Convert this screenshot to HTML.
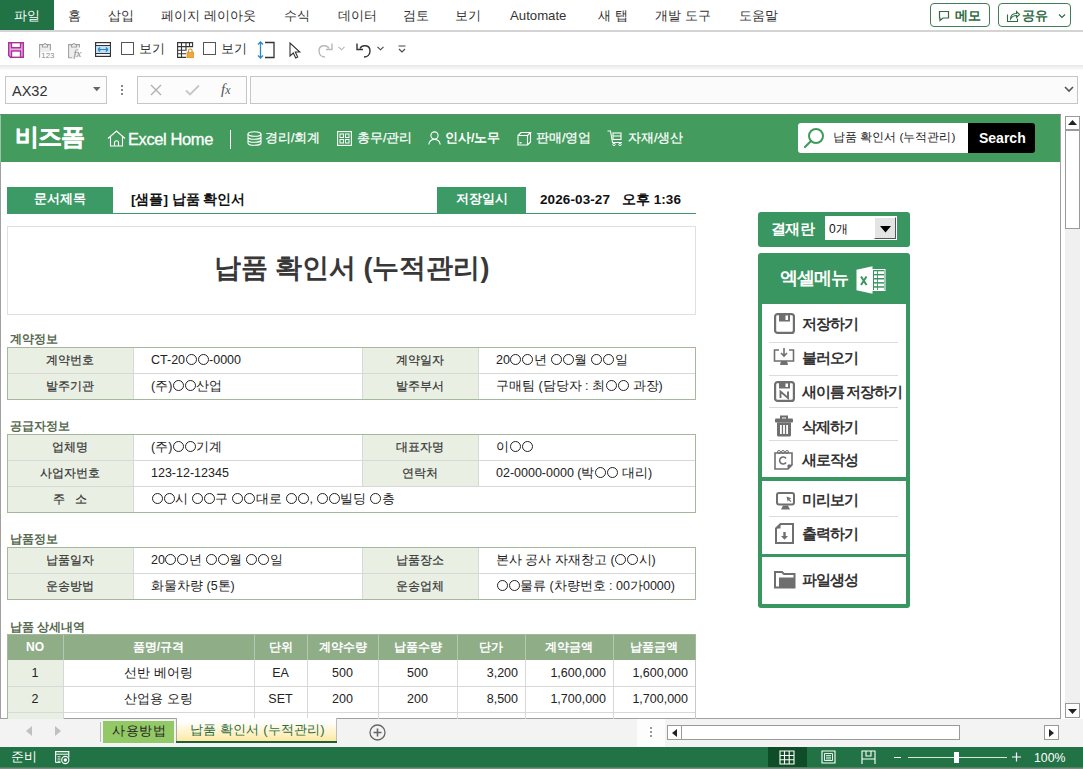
<!DOCTYPE html>
<html><head><meta charset="utf-8">
<style>
*{box-sizing:border-box}
html,body{margin:0;padding:0}
body{width:1083px;height:769px;position:relative;overflow:hidden;background:#fff;font-family:"Liberation Sans",sans-serif;color:#222}
.a{position:absolute;white-space:nowrap}
svg.a{overflow:visible}
.o{display:inline-block;width:11px;height:11px;border:1px solid currentColor;border-radius:50%;margin:0 0.5px;vertical-align:-1px}
</style></head><body>
<div class="a" style="left:0px;top:0px;width:54px;height:30px;background:#217346"></div><div class="a" style="left:14px;top:9px;font-size:13.2px;line-height:13.2px;color:#fff;font-weight:normal;">파일</div><div class="a" style="left:68px;top:9px;font-size:13.2px;line-height:13.2px;color:#333;font-weight:normal;">홈</div><div class="a" style="left:108px;top:9px;font-size:13.2px;line-height:13.2px;color:#333;font-weight:normal;">삽입</div><div class="a" style="left:161px;top:9px;font-size:13.2px;line-height:13.2px;color:#333;font-weight:normal;">페이지 레이아웃</div><div class="a" style="left:284px;top:9px;font-size:13.2px;line-height:13.2px;color:#333;font-weight:normal;">수식</div><div class="a" style="left:338px;top:9px;font-size:13.2px;line-height:13.2px;color:#333;font-weight:normal;">데이터</div><div class="a" style="left:403px;top:9px;font-size:13.2px;line-height:13.2px;color:#333;font-weight:normal;">검토</div><div class="a" style="left:455px;top:9px;font-size:13.2px;line-height:13.2px;color:#333;font-weight:normal;">보기</div><div class="a" style="left:510px;top:9px;font-size:13.2px;line-height:13.2px;color:#333;font-weight:normal;">Automate</div><div class="a" style="left:598px;top:9px;font-size:13.2px;line-height:13.2px;color:#333;font-weight:normal;">새 탭</div><div class="a" style="left:655px;top:9px;font-size:13.2px;line-height:13.2px;color:#333;font-weight:normal;">개발 도구</div><div class="a" style="left:739px;top:9px;font-size:13.2px;line-height:13.2px;color:#333;font-weight:normal;">도움말</div><div class="a" style="left:930px;top:3px;width:60px;height:24px;border:1px solid #3f7f55;border-radius:4px"></div><div class="a" style="left:998px;top:3px;width:73px;height:24px;border:1px solid #3f7f55;border-radius:4px"></div><svg class="a" style="left:938px;top:10px;" width="12" height="12" viewBox="0 0 12 12"><path d="M1.5 1.5h9v6.5h-5.5l-3 2.5v-2.5h-0.5z" fill="none" stroke="#2f6b43" stroke-width="1.2"/></svg><div class="a" style="left:955px;top:9px;font-size:13px;line-height:13px;color:#2f6b43;font-weight:bold;">메모</div><svg class="a" style="left:1006px;top:9px;" width="14" height="14" viewBox="0 0 14 14"><path d="M1.5 5.5v7h10v-3" fill="none" stroke="#2f6b43" stroke-width="1.1"/><path d="M4.5 10c0-4 3-5.5 6-5.5V2.5l3 3-3 3V6.5c-2.5 0-4.5 1-6 3.5z" fill="none" stroke="#2f6b43" stroke-width="1.1"/></svg><div class="a" style="left:1022px;top:9px;font-size:13px;line-height:13px;color:#2f6b43;font-weight:bold;">공유</div><svg class="a" style="left:1058px;top:13px;" width="8" height="6" viewBox="0 0 8 6"><path d="M1 1.5l3 3 3-3" fill="none" stroke="#2f6b43" stroke-width="1.2"/></svg><div class="a" style="left:0px;top:30px;width:1083px;height:2px;background:#d4d4d4"></div><div class="a" style="left:0px;top:65px;width:1083px;height:6px;background:linear-gradient(#e8e8e8,#f6f6f6 60%,#fff)"></div><svg class="a" style="left:8px;top:42px;" width="16" height="16" viewBox="0 0 16 16"><path d="M0.7 0.7h14.6v14.6H2.5L0.7 13.5z" fill="#e3a9e0" stroke="#a6339f" stroke-width="1.4"/><rect x="3.5" y="0.7" width="9" height="5" fill="#fff" stroke="#a6339f" stroke-width="1.4"/><rect x="3.5" y="9" width="9" height="6.3" fill="#fff" stroke="#a6339f" stroke-width="1.4"/></svg><svg class="a" style="left:39px;top:41px;" width="15" height="17" viewBox="0 0 15 17"><rect x="1.2" y="4.2" width="9.6" height="7" fill="#eeeeee"/><path d="M0.6 16.8V3.6H3.5M8.5 3.6H11.4V9.5" fill="none" stroke="#a0a0a0" stroke-width="1.1"/><path d="M3.5 6V3.6h1.4a1.1 1.1 0 0 1 2.2 0h1.4V6z" fill="#fff" stroke="#a0a0a0" stroke-width="1.1"/><text x="2.3" y="16.8" font-size="7.8" fill="#8a8a8a" font-family="Liberation Sans">123</text></svg><svg class="a" style="left:68px;top:41px;" width="15" height="17" viewBox="0 0 15 17"><rect x="1.2" y="4.2" width="9.6" height="12" fill="#eeeeee"/><path d="M4.5 16.8H0.6V3.6H3.5M8.5 3.6H11.4V6.5" fill="none" stroke="#a0a0a0" stroke-width="1.1"/><path d="M3.5 6V3.6h1.4a1.1 1.1 0 0 1 2.2 0h1.4V6z" fill="#fff" stroke="#a0a0a0" stroke-width="1.1"/><text x="5.5" y="16.2" font-size="11" font-style="italic" fill="#8a8a8a" font-family="Liberation Serif">fx</text></svg><svg class="a" style="left:95px;top:42px;" width="16" height="15" viewBox="0 0 16 15"><rect x="0.6" y="0.6" width="14.8" height="13.8" fill="#fff" stroke="#333" stroke-width="1.2"/><rect x="1.2" y="3.6" width="13.6" height="7.8" fill="#bfe0f5"/><path d="M0.6 3.5h14.8M0.6 11.5h14.8" stroke="#333" stroke-width="1.1"/><path d="M3 7.5h10M3 7.5l2.2-2M3 7.5l2.2 2M13 7.5l-2.2-2M13 7.5l-2.2 2" fill="none" stroke="#2b87c8" stroke-width="1.2"/></svg><div class="a" style="left:121px;top:42px;width:13px;height:13px;border:1px solid #555;background:#fff"></div><div class="a" style="left:139px;top:42px;font-size:13px;line-height:13px;color:#333;font-weight:normal;">보기</div><svg class="a" style="left:177px;top:42px;" width="17" height="16" viewBox="0 0 17 16"><path d="M0.6 0.6h15v4H0.6zM0.6 4.6v10.8h8.5M0.6 8.2h9M0.6 11.8h8.5M4.5 0.6v14.8M9 0.6v8M12.5 0.6v4" fill="none" stroke="#333" stroke-width="1.1"/><rect x="10" y="10.2" width="6.5" height="5.5" fill="#f2a640" stroke="#d68b20" stroke-width="0.7"/><path d="M11.5 10.2V8.8a1.8 1.8 0 0 1 3.6 0v1.4" fill="none" stroke="#d68b20" stroke-width="1.1"/></svg><div class="a" style="left:203px;top:42px;width:13px;height:13px;border:1px solid #555;background:#fff"></div><div class="a" style="left:221px;top:42px;font-size:13px;line-height:13px;color:#333;font-weight:normal;">보기</div><svg class="a" style="left:257px;top:41px;" width="18" height="18" viewBox="0 0 18 18"><path d="M3.5 1v16M1 3.5l2.5-2.5 2.5 2.5M1 14.5l2.5 2.5 2.5-2.5" fill="none" stroke="#2b87c8" stroke-width="1.3"/><path d="M8 1.5h9v15H8" fill="none" stroke="#333" stroke-width="1.3"/></svg><svg class="a" style="left:289px;top:42px;" width="12" height="17" viewBox="0 0 12 17"><path d="M1 1v13l3.3-3 2.4 5 2-1-2.4-5h4.5z" fill="#fff" stroke="#333" stroke-width="1.1"/></svg><svg class="a" style="left:317px;top:41px;" width="17" height="17" viewBox="0 0 17 17"><g transform="translate(17 0) scale(-1 1)"><path d="M5 7.5c2-4 10-4 10 2.5 0 4-3 6-6 6" fill="none" stroke="#b8b8b8" stroke-width="1.4"/><path d="M2 2.5v6h6" fill="none" stroke="#b8b8b8" stroke-width="1.4"/></g></svg><svg class="a" style="left:338px;top:46px;" width="7" height="5" viewBox="0 0 7 5"><path d="M0.5 0.8l3 3 3-3" fill="none" stroke="#b5b5b5" stroke-width="1.1"/></svg><svg class="a" style="left:355px;top:41px;" width="17" height="17" viewBox="0 0 17 17"><path d="M5 7.5c2-4 10-4 10 2.5 0 4-3 6-6 6" fill="none" stroke="#333" stroke-width="1.4"/><path d="M2 2.5v6h6" fill="none" stroke="#333" stroke-width="1.4"/></svg><svg class="a" style="left:377px;top:46px;" width="7" height="5" viewBox="0 0 7 5"><path d="M0.5 0.8l3 3 3-3" fill="none" stroke="#444" stroke-width="1.1"/></svg><svg class="a" style="left:398px;top:45px;" width="8" height="8" viewBox="0 0 8 8"><path d="M0.5 1h7M1 4l3 3 3-3" fill="none" stroke="#444" stroke-width="1.1"/></svg><div class="a" style="left:0px;top:70px;width:1083px;height:44px;background:#fff"></div><div class="a" style="left:5px;top:76px;width:102px;height:28px;border:1px solid #c6c6c6;background:#fcfcfc"></div><div class="a" style="left:12px;top:84px;font-size:14.5px;line-height:14.5px;color:#333;font-weight:normal;">AX32</div><svg class="a" style="left:93px;top:87px;" width="8" height="5" viewBox="0 0 8 5"><path d="M0 0h7.5l-3.75 4.2z" fill="#666"/></svg><div class="a" style="left:121px;top:85px;width:2px;height:2px;background:#888"></div><div class="a" style="left:121px;top:89px;width:2px;height:2px;background:#888"></div><div class="a" style="left:121px;top:93px;width:2px;height:2px;background:#888"></div><div class="a" style="left:137px;top:76px;width:110px;height:28px;border:1px solid #c6c6c6;background:#fcfcfc"></div><svg class="a" style="left:150px;top:84px;" width="12" height="12" viewBox="0 0 12 12"><path d="M1 1l10 10M11 1L1 11" stroke="#b0b0b0" stroke-width="1.4"/></svg><svg class="a" style="left:185px;top:84px;" width="15" height="12" viewBox="0 0 15 12"><path d="M1 6.5l4 4 9-9" fill="none" stroke="#c6c6c6" stroke-width="1.8"/></svg><div class="a" style="left:221px;top:81px;font-family:'Liberation Serif',serif;font-style:italic;font-weight:normal;font-size:15px;color:#555">f<span style="font-size:12px">x</span></div><div class="a" style="left:250px;top:76px;width:828px;height:28px;border:1px solid #c6c6c6;background:#fbfbfb"></div><svg class="a" style="left:1064px;top:86px;" width="10" height="7" viewBox="0 0 10 7"><path d="M1 1l4 4 4-4" fill="none" stroke="#555" stroke-width="1.6"/></svg><div class="a" style="left:0px;top:114px;width:1061px;height:605px;border-left:1px solid #a0a0a0;border-right:1px solid #a0a0a0;border-bottom:1px solid #a0a0a0"></div><div class="a" style="left:1px;top:114px;width:1059px;height:48px;background:#439b5e"></div><div class="a" style="left:0px;top:114px;width:1061px;height:1px;background:#5d8f6b"></div><div class="a" style="left:0px;top:115px;width:1px;height:47px;background:#9ec4a8"></div><div class="a" style="left:15px;top:125px;font-size:24px;line-height:24px;color:#fff;font-weight:bold;letter-spacing:-1px;-webkit-text-stroke:0.4px #fff">비즈폼</div><svg class="a" style="left:107px;top:130px;" width="19" height="17" viewBox="0 0 19 17"><path d="M1 8.5L9.5 1 18 8.5M3.5 6.5V16h12V6.5" fill="none" stroke="#fff" stroke-width="1.1"/><path d="M7.5 16v-3.2a2 2 0 0 1 4 0V16" fill="none" stroke="#fff" stroke-width="1.1"/></svg><div class="a" style="left:128px;top:131px;font-size:16.5px;line-height:16.5px;color:#fff;font-weight:normal;letter-spacing:-0.4px;-webkit-text-stroke:0.3px #fff">Excel Home</div><div class="a" style="left:230px;top:130px;width:1px;height:19px;background:#fff"></div><svg class="a" style="left:247px;top:131px;" width="15" height="15" viewBox="0 0 15 15"><ellipse cx="7.5" cy="3" rx="6.5" ry="2.3" fill="none" stroke="#fff" stroke-width="1.1"/><path d="M1 3v9c0 1.3 2.9 2.3 6.5 2.3S14 13.3 14 12V3M1 6c0 1.3 2.9 2.3 6.5 2.3S14 7.3 14 6M1 9c0 1.3 2.9 2.3 6.5 2.3S14 10.3 14 9" fill="none" stroke="#fff" stroke-width="1.1"/></svg><div class="a" style="left:265px;top:132px;font-size:12.6px;line-height:12.6px;color:#fff;font-weight:normal;-webkit-text-stroke:0.25px #fff">경리/회계</div><svg class="a" style="left:337px;top:131px;" width="15" height="15" viewBox="0 0 15 15"><rect x="0.6" y="0.6" width="13.8" height="13.8" fill="none" stroke="#fff" stroke-width="1.1"/><rect x="3" y="3" width="3.5" height="3.5" fill="none" stroke="#fff" stroke-width="1"/><rect x="8.5" y="3" width="3.5" height="3.5" fill="none" stroke="#fff" stroke-width="1"/><rect x="3" y="8.5" width="3.5" height="3.5" fill="none" stroke="#fff" stroke-width="1"/><rect x="8.5" y="8.5" width="3.5" height="3.5" fill="none" stroke="#fff" stroke-width="1"/></svg><div class="a" style="left:357px;top:132px;font-size:12.6px;line-height:12.6px;color:#fff;font-weight:normal;-webkit-text-stroke:0.25px #fff">총무/관리</div><svg class="a" style="left:428px;top:131px;" width="13" height="14" viewBox="0 0 13 14"><circle cx="6.5" cy="4.5" r="3.6" fill="none" stroke="#fff" stroke-width="1.1"/><path d="M0.8 13.5c0.5-3.5 2.8-5 5.7-5s5.2 1.5 5.7 5" fill="none" stroke="#fff" stroke-width="1.1"/></svg><div class="a" style="left:445px;top:132px;font-size:12.5px;line-height:12.5px;color:#fff;font-weight:bold;">인사/노무</div><svg class="a" style="left:517px;top:131px;" width="15" height="15" viewBox="0 0 15 15"><path d="M1 4.5h9.5v9.5H1zM1 4.5L4 1.5h9.5L10.5 4.5M13.5 1.5v9.5l-3 3" fill="none" stroke="#fff" stroke-width="1.1"/><rect x="2.5" y="11" width="2" height="1.5" fill="#fff"/></svg><div class="a" style="left:536px;top:132px;font-size:12.6px;line-height:12.6px;color:#fff;font-weight:normal;-webkit-text-stroke:0.25px #fff">판매/영업</div><svg class="a" style="left:607px;top:130px;" width="17" height="16" viewBox="0 0 17 16"><path d="M0.5 1h3l2 11.5h9.5" fill="none" stroke="#fff" stroke-width="1.1"/><rect x="6" y="3" width="8" height="6.5" fill="none" stroke="#fff" stroke-width="1.1"/><path d="M6 6h8" stroke="#fff" stroke-width="1"/><circle cx="7" cy="14.5" r="1.2" fill="none" stroke="#fff"/><circle cx="13" cy="14.5" r="1.2" fill="none" stroke="#fff"/></svg><div class="a" style="left:628px;top:132px;font-size:12.6px;line-height:12.6px;color:#fff;font-weight:normal;-webkit-text-stroke:0.25px #fff">자재/생산</div><div class="a" style="left:798px;top:123px;width:170px;height:30px;background:#fff;border-radius:3px 0 0 3px"></div><div class="a" style="left:968px;top:123px;width:67px;height:30px;background:#000;border-radius:0 3px 3px 0"></div><svg class="a" style="left:803px;top:127px;" width="22" height="22" viewBox="0 0 22 22"><circle cx="13" cy="9" r="7" fill="none" stroke="#3e9a5c" stroke-width="2"/><path d="M8 14l-6 6" stroke="#3e9a5c" stroke-width="2.2" stroke-linecap="round"/></svg><div class="a" style="left:833px;top:132px;font-size:11.8px;line-height:11.8px;color:#222;font-weight:normal;">납품 확인서 (누적관리)</div><div class="a" style="left:979px;top:131px;font-size:14px;line-height:14px;color:#fff;font-weight:bold;">Search</div><div class="a" style="left:7px;top:187px;width:106px;height:27px;background:#3b9a66"></div><div class="a" style="left:7px;top:213px;width:689px;height:1px;background:#3b9a66"></div><div class="a" style="left:437px;top:187px;width:89px;height:27px;background:#3b9a66"></div><div class="a" style="left:7px;width:106px;text-align:center;top:192px;font-size:13px;line-height:13px;color:#fff;font-weight:bold;">문서제목</div><div class="a" style="left:131px;top:193px;font-size:13.5px;line-height:13.5px;color:#111;font-weight:bold;">[샘플] 납품 확인서</div><div class="a" style="left:437px;width:89px;text-align:center;top:192px;font-size:13px;line-height:13px;color:#fff;font-weight:bold;">저장일시</div><div class="a" style="left:540px;top:193px;font-size:13.5px;line-height:13.5px;color:#111;font-weight:bold;letter-spacing:0.1px">2026-03-27&nbsp;&nbsp; 오후 1:36</div><div class="a" style="left:7px;top:226px;width:689px;height:89px;border:1px solid #e0e0e0"></div><div class="a" style="left:7px;width:689px;text-align:center;top:255px;font-size:27px;line-height:27px;color:#383838;font-weight:bold;">납품 확인서 (누적관리)</div><div class="a" style="left:10px;top:333px;font-size:11.7px;line-height:11.7px;color:#56694f;font-weight:bold;">계약정보</div><div class="a" style="left:7px;top:347px;width:126px;height:26px;background:#e9f0e3"></div><div class="a" style="left:362px;top:347px;width:116px;height:26px;background:#e9f0e3"></div><div class="a" style="left:7px;top:373px;width:126px;height:26px;background:#e9f0e3"></div><div class="a" style="left:362px;top:373px;width:116px;height:26px;background:#e9f0e3"></div><div class="a" style="left:7px;top:373px;width:689px;height:1px;background:#d8d8d8"></div><div class="a" style="left:133px;top:347px;width:1px;height:26px;background:#d8d8d8"></div><div class="a" style="left:362px;top:347px;width:1px;height:26px;background:#d8d8d8"></div><div class="a" style="left:478px;top:347px;width:1px;height:26px;background:#d8d8d8"></div><div class="a" style="left:133px;top:373px;width:1px;height:26px;background:#d8d8d8"></div><div class="a" style="left:362px;top:373px;width:1px;height:26px;background:#d8d8d8"></div><div class="a" style="left:478px;top:373px;width:1px;height:26px;background:#d8d8d8"></div><div class="a" style="left:7px;top:347px;width:689px;height:53px;border:1px solid #a4b99c"></div><div class="a" style="left:7px;width:126px;text-align:center;top:354px;font-size:12px;line-height:12px;color:#333;font-weight:normal;-webkit-text-stroke:0.2px #333">계약번호</div><div class="a" style="left:151px;top:354px;font-size:12.5px;line-height:12.5px;color:#222;font-weight:normal;">CT-20<span class="o"></span><span class="o"></span>-0000</div><div class="a" style="left:362px;width:116px;text-align:center;top:354px;font-size:12px;line-height:12px;color:#333;font-weight:normal;-webkit-text-stroke:0.2px #333">계약일자</div><div class="a" style="left:496px;top:354px;font-size:12.5px;line-height:12.5px;color:#222;font-weight:normal;">20<span class="o"></span><span class="o"></span>년 <span class="o"></span><span class="o"></span>월 <span class="o"></span><span class="o"></span>일</div><div class="a" style="left:7px;width:126px;text-align:center;top:380px;font-size:12px;line-height:12px;color:#333;font-weight:normal;-webkit-text-stroke:0.2px #333">발주기관</div><div class="a" style="left:151px;top:380px;font-size:12.5px;line-height:12.5px;color:#222;font-weight:normal;">(주)<span class="o"></span><span class="o"></span>산업</div><div class="a" style="left:362px;width:116px;text-align:center;top:380px;font-size:12px;line-height:12px;color:#333;font-weight:normal;-webkit-text-stroke:0.2px #333">발주부서</div><div class="a" style="left:496px;top:380px;font-size:12.5px;line-height:12.5px;color:#222;font-weight:normal;">구매팀 (담당자 : 최<span class="o"></span><span class="o"></span> 과장)</div><div class="a" style="left:10px;top:420px;font-size:11.7px;line-height:11.7px;color:#56694f;font-weight:bold;">공급자정보</div><div class="a" style="left:7px;top:434px;width:126px;height:26px;background:#e9f0e3"></div><div class="a" style="left:362px;top:434px;width:116px;height:26px;background:#e9f0e3"></div><div class="a" style="left:7px;top:460px;width:126px;height:26px;background:#e9f0e3"></div><div class="a" style="left:362px;top:460px;width:116px;height:26px;background:#e9f0e3"></div><div class="a" style="left:7px;top:486px;width:126px;height:26px;background:#e9f0e3"></div><div class="a" style="left:7px;top:460px;width:689px;height:1px;background:#d8d8d8"></div><div class="a" style="left:7px;top:486px;width:689px;height:1px;background:#d8d8d8"></div><div class="a" style="left:133px;top:434px;width:1px;height:26px;background:#d8d8d8"></div><div class="a" style="left:362px;top:434px;width:1px;height:26px;background:#d8d8d8"></div><div class="a" style="left:478px;top:434px;width:1px;height:26px;background:#d8d8d8"></div><div class="a" style="left:133px;top:460px;width:1px;height:26px;background:#d8d8d8"></div><div class="a" style="left:362px;top:460px;width:1px;height:26px;background:#d8d8d8"></div><div class="a" style="left:478px;top:460px;width:1px;height:26px;background:#d8d8d8"></div><div class="a" style="left:133px;top:486px;width:1px;height:26px;background:#d8d8d8"></div><div class="a" style="left:7px;top:434px;width:689px;height:79px;border:1px solid #a4b99c"></div><div class="a" style="left:7px;width:126px;text-align:center;top:441px;font-size:12px;line-height:12px;color:#333;font-weight:normal;-webkit-text-stroke:0.2px #333">업체명</div><div class="a" style="left:151px;top:441px;font-size:12.5px;line-height:12.5px;color:#222;font-weight:normal;">(주)<span class="o"></span><span class="o"></span>기계</div><div class="a" style="left:362px;width:116px;text-align:center;top:441px;font-size:12px;line-height:12px;color:#333;font-weight:normal;-webkit-text-stroke:0.2px #333">대표자명</div><div class="a" style="left:496px;top:441px;font-size:12.5px;line-height:12.5px;color:#222;font-weight:normal;">이<span class="o"></span><span class="o"></span></div><div class="a" style="left:7px;width:126px;text-align:center;top:467px;font-size:12px;line-height:12px;color:#333;font-weight:normal;-webkit-text-stroke:0.2px #333">사업자번호</div><div class="a" style="left:151px;top:467px;font-size:12.5px;line-height:12.5px;color:#222;font-weight:normal;">123-12-12345</div><div class="a" style="left:362px;width:116px;text-align:center;top:467px;font-size:12px;line-height:12px;color:#333;font-weight:normal;-webkit-text-stroke:0.2px #333">연락처</div><div class="a" style="left:496px;top:467px;font-size:12.5px;line-height:12.5px;color:#222;font-weight:normal;">02-0000-0000 (박<span class="o"></span><span class="o"></span> 대리)</div><div class="a" style="left:7px;width:126px;text-align:center;top:493px;font-size:12px;line-height:12px;color:#333;font-weight:normal;-webkit-text-stroke:0.2px #333">주&nbsp;&nbsp;&nbsp;소</div><div class="a" style="left:151px;top:493px;font-size:12.5px;line-height:12.5px;color:#222;font-weight:normal;"><span class="o"></span><span class="o"></span>시 <span class="o"></span><span class="o"></span>구 <span class="o"></span><span class="o"></span>대로 <span class="o"></span><span class="o"></span>, <span class="o"></span><span class="o"></span>빌딩 <span class="o"></span>층</div><div class="a" style="left:10px;top:533px;font-size:11.7px;line-height:11.7px;color:#56694f;font-weight:bold;">납품정보</div><div class="a" style="left:7px;top:547px;width:126px;height:26px;background:#e9f0e3"></div><div class="a" style="left:362px;top:547px;width:116px;height:26px;background:#e9f0e3"></div><div class="a" style="left:7px;top:573px;width:126px;height:26px;background:#e9f0e3"></div><div class="a" style="left:362px;top:573px;width:116px;height:26px;background:#e9f0e3"></div><div class="a" style="left:7px;top:573px;width:689px;height:1px;background:#d8d8d8"></div><div class="a" style="left:133px;top:547px;width:1px;height:26px;background:#d8d8d8"></div><div class="a" style="left:362px;top:547px;width:1px;height:26px;background:#d8d8d8"></div><div class="a" style="left:478px;top:547px;width:1px;height:26px;background:#d8d8d8"></div><div class="a" style="left:133px;top:573px;width:1px;height:26px;background:#d8d8d8"></div><div class="a" style="left:362px;top:573px;width:1px;height:26px;background:#d8d8d8"></div><div class="a" style="left:478px;top:573px;width:1px;height:26px;background:#d8d8d8"></div><div class="a" style="left:7px;top:547px;width:689px;height:53px;border:1px solid #a4b99c"></div><div class="a" style="left:7px;width:126px;text-align:center;top:554px;font-size:12px;line-height:12px;color:#333;font-weight:normal;-webkit-text-stroke:0.2px #333">납품일자</div><div class="a" style="left:151px;top:554px;font-size:12.5px;line-height:12.5px;color:#222;font-weight:normal;">20<span class="o"></span><span class="o"></span>년 <span class="o"></span><span class="o"></span>월 <span class="o"></span><span class="o"></span>일</div><div class="a" style="left:362px;width:116px;text-align:center;top:554px;font-size:12px;line-height:12px;color:#333;font-weight:normal;-webkit-text-stroke:0.2px #333">납품장소</div><div class="a" style="left:496px;top:554px;font-size:12.5px;line-height:12.5px;color:#222;font-weight:normal;">본사 공사 자재창고 (<span class="o"></span><span class="o"></span>시)</div><div class="a" style="left:7px;width:126px;text-align:center;top:580px;font-size:12px;line-height:12px;color:#333;font-weight:normal;-webkit-text-stroke:0.2px #333">운송방법</div><div class="a" style="left:151px;top:580px;font-size:12.5px;line-height:12.5px;color:#222;font-weight:normal;">화물차량 (5톤)</div><div class="a" style="left:362px;width:116px;text-align:center;top:580px;font-size:12px;line-height:12px;color:#333;font-weight:normal;-webkit-text-stroke:0.2px #333">운송업체</div><div class="a" style="left:496px;top:580px;font-size:12.5px;line-height:12.5px;color:#222;font-weight:normal;"><span class="o"></span><span class="o"></span>물류 (차량번호 : 00가0000)</div><div class="a" style="left:10px;top:621px;font-size:11.7px;line-height:11.7px;color:#56694f;font-weight:bold;">납품 상세내역</div><div class="a" style="left:7px;top:634px;width:689px;height:26px;background:#8fae88"></div><div class="a" style="left:7px;top:660px;width:56px;height:26px;background:#e9f0e3"></div><div class="a" style="left:7px;top:686px;width:56px;height:26px;background:#e9f0e3"></div><div class="a" style="left:7px;top:712px;width:56px;height:26px;background:#e9f0e3"></div><div class="a" style="left:7px;top:686px;width:689px;height:1px;background:#d8d8d8"></div><div class="a" style="left:7px;top:712px;width:689px;height:1px;background:#d8d8d8"></div><div class="a" style="left:63px;top:634px;width:1px;height:26px;background:#b5c9b0"></div><div class="a" style="left:63px;top:660px;width:1px;height:60px;background:#d8d8d8"></div><div class="a" style="left:254px;top:634px;width:1px;height:26px;background:#b5c9b0"></div><div class="a" style="left:254px;top:660px;width:1px;height:60px;background:#d8d8d8"></div><div class="a" style="left:307px;top:634px;width:1px;height:26px;background:#b5c9b0"></div><div class="a" style="left:307px;top:660px;width:1px;height:60px;background:#d8d8d8"></div><div class="a" style="left:378px;top:634px;width:1px;height:26px;background:#b5c9b0"></div><div class="a" style="left:378px;top:660px;width:1px;height:60px;background:#d8d8d8"></div><div class="a" style="left:457px;top:634px;width:1px;height:26px;background:#b5c9b0"></div><div class="a" style="left:457px;top:660px;width:1px;height:60px;background:#d8d8d8"></div><div class="a" style="left:525px;top:634px;width:1px;height:26px;background:#b5c9b0"></div><div class="a" style="left:525px;top:660px;width:1px;height:60px;background:#d8d8d8"></div><div class="a" style="left:613px;top:634px;width:1px;height:26px;background:#b5c9b0"></div><div class="a" style="left:613px;top:660px;width:1px;height:60px;background:#d8d8d8"></div><div class="a" style="left:7px;top:634px;width:689px;height:1px;background:#a4b99c"></div><div class="a" style="left:7px;top:634px;width:1px;height:90px;background:#a4b99c"></div><div class="a" style="left:695px;top:634px;width:1px;height:26px;background:#a4b99c"></div><div class="a" style="left:695px;top:660px;width:1px;height:60px;background:#c9c9c9"></div><div class="a" style="left:7px;width:56px;text-align:center;top:641px;font-size:12px;line-height:12px;color:#fff;font-weight:bold;">NO</div><div class="a" style="left:63px;width:191px;text-align:center;top:641px;font-size:12px;line-height:12px;color:#fff;font-weight:bold;">품명/규격</div><div class="a" style="left:254px;width:53px;text-align:center;top:641px;font-size:12px;line-height:12px;color:#fff;font-weight:bold;">단위</div><div class="a" style="left:307px;width:71px;text-align:center;top:641px;font-size:12px;line-height:12px;color:#fff;font-weight:bold;">계약수량</div><div class="a" style="left:378px;width:79px;text-align:center;top:641px;font-size:12px;line-height:12px;color:#fff;font-weight:bold;">납품수량</div><div class="a" style="left:457px;width:68px;text-align:center;top:641px;font-size:12px;line-height:12px;color:#fff;font-weight:bold;">단가</div><div class="a" style="left:525px;width:88px;text-align:center;top:641px;font-size:12px;line-height:12px;color:#fff;font-weight:bold;">계약금액</div><div class="a" style="left:613px;width:82px;text-align:center;top:641px;font-size:12px;line-height:12px;color:#fff;font-weight:bold;">납품금액</div><div class="a" style="left:7px;width:56px;text-align:center;top:667px;font-size:12.5px;line-height:12.5px;color:#222;font-weight:normal;">1</div><div class="a" style="left:63px;width:191px;text-align:center;top:667px;font-size:12.5px;line-height:12.5px;color:#222;font-weight:normal;">선반 베어링</div><div class="a" style="left:254px;width:53px;text-align:center;top:667px;font-size:12.5px;line-height:12.5px;color:#222;font-weight:normal;">EA</div><div class="a" style="left:307px;width:71px;text-align:center;top:667px;font-size:12.5px;line-height:12.5px;color:#222;font-weight:normal;">500</div><div class="a" style="left:378px;width:79px;text-align:center;top:667px;font-size:12.5px;line-height:12.5px;color:#222;font-weight:normal;">500</div><div class="a" style="right:565px;top:667px;font-size:12.5px;line-height:12.5px;color:#222;font-weight:normal;text-align:right;">3,200</div><div class="a" style="right:477px;top:667px;font-size:12.5px;line-height:12.5px;color:#222;font-weight:normal;text-align:right;">1,600,000</div><div class="a" style="right:395px;top:667px;font-size:12.5px;line-height:12.5px;color:#222;font-weight:normal;text-align:right;">1,600,000</div><div class="a" style="left:7px;width:56px;text-align:center;top:693px;font-size:12.5px;line-height:12.5px;color:#222;font-weight:normal;">2</div><div class="a" style="left:63px;width:191px;text-align:center;top:693px;font-size:12.5px;line-height:12.5px;color:#222;font-weight:normal;">산업용 오링</div><div class="a" style="left:254px;width:53px;text-align:center;top:693px;font-size:12.5px;line-height:12.5px;color:#222;font-weight:normal;">SET</div><div class="a" style="left:307px;width:71px;text-align:center;top:693px;font-size:12.5px;line-height:12.5px;color:#222;font-weight:normal;">200</div><div class="a" style="left:378px;width:79px;text-align:center;top:693px;font-size:12.5px;line-height:12.5px;color:#222;font-weight:normal;">200</div><div class="a" style="right:565px;top:693px;font-size:12.5px;line-height:12.5px;color:#222;font-weight:normal;text-align:right;">8,500</div><div class="a" style="right:477px;top:693px;font-size:12.5px;line-height:12.5px;color:#222;font-weight:normal;text-align:right;">1,700,000</div><div class="a" style="right:395px;top:693px;font-size:12.5px;line-height:12.5px;color:#222;font-weight:normal;text-align:right;">1,700,000</div><div class="a" style="left:758px;top:212px;width:152px;height:35px;background:#3a9660;border-radius:3px"></div><div class="a" style="left:771px;top:222px;font-size:14.5px;line-height:14.5px;color:#fff;font-weight:bold;letter-spacing:-0.6px">결재란</div><div class="a" style="left:825px;top:216px;width:72px;height:24px;background:#fff"></div><div class="a" style="left:829px;top:223px;font-size:12px;line-height:12px;color:#111;font-weight:normal;">0개</div><div class="a" style="left:874px;top:217px;width:22px;height:22px;background:#e4e4e4;border-right:1px solid #555;border-bottom:1px solid #555;border-top:1px solid #fff;border-left:1px solid #fff"></div><svg class="a" style="left:880px;top:226px;" width="11" height="7" viewBox="0 0 11 7"><path d="M0 0h11L5.5 6.5z" fill="#000"/></svg><div class="a" style="left:758px;top:253px;width:152px;height:355px;background:#3a9660;border-radius:3px"></div><div class="a" style="left:780px;top:270px;font-size:17.5px;line-height:17.5px;color:#fff;font-weight:bold;letter-spacing:-1px">엑셀메뉴</div><svg class="a" style="left:856px;top:266px;" width="30" height="28" viewBox="0 0 30 28"><path d="M0.5 3.8L16.5 0.3V27.7L0.5 24.2z" fill="#fff"/><path d="M5 10.5l5.5 8.5M10.5 10.5L5 19" stroke="#3a9660" stroke-width="2"/><rect x="16.5" y="3.5" width="12.5" height="21" fill="none" stroke="#fff" stroke-width="1"/><rect x="18" y="5.3" width="10" height="2.6" fill="#fff"/><rect x="18" y="9.4" width="10" height="2.6" fill="#fff"/><rect x="18" y="13.5" width="10" height="2.6" fill="#fff"/><rect x="18" y="17.6" width="10" height="2.6" fill="#fff"/><rect x="18" y="21.7" width="10" height="2.6" fill="#fff"/><path d="M21.5 4v20" stroke="#3a9660" stroke-width="0.9"/></svg><div class="a" style="left:762px;top:304px;width:144px;height:173px;background:#fff"></div><div class="a" style="left:762px;top:481px;width:144px;height:73px;background:#fff"></div><div class="a" style="left:762px;top:557px;width:144px;height:47px;background:#fff"></div><div class="a" style="left:769px;top:342px;width:129px;height:1px;background:#dcdcdc"></div><div class="a" style="left:769px;top:375px;width:129px;height:1px;background:#dcdcdc"></div><div class="a" style="left:769px;top:407px;width:129px;height:1px;background:#dcdcdc"></div><div class="a" style="left:769px;top:440px;width:129px;height:1px;background:#dcdcdc"></div><div class="a" style="left:769px;top:516px;width:129px;height:1px;background:#dcdcdc"></div><div class="a" style="left:802px;top:316px;font-size:15px;line-height:15px;color:#333;font-weight:bold;letter-spacing:-1px">저장하기</div><div class="a" style="left:802px;top:350px;font-size:15px;line-height:15px;color:#333;font-weight:bold;letter-spacing:-1px">불러오기</div><div class="a" style="left:802px;top:384px;font-size:15px;line-height:15px;color:#333;font-weight:bold;letter-spacing:-1px">새이름<span style='letter-spacing:-2.5px'> </span>저장하기</div><div class="a" style="left:802px;top:419px;font-size:15px;line-height:15px;color:#333;font-weight:bold;letter-spacing:-1px">삭제하기</div><div class="a" style="left:802px;top:452px;font-size:15px;line-height:15px;color:#333;font-weight:bold;letter-spacing:-1px">새로작성</div><div class="a" style="left:802px;top:492px;font-size:15px;line-height:15px;color:#333;font-weight:bold;letter-spacing:-1px">미리보기</div><div class="a" style="left:802px;top:526px;font-size:15px;line-height:15px;color:#333;font-weight:bold;letter-spacing:-1px">출력하기</div><div class="a" style="left:802px;top:572px;font-size:15px;line-height:15px;color:#333;font-weight:bold;letter-spacing:-1px">파일생성</div><svg class="a" style="left:774px;top:313px;" width="21" height="21" viewBox="0 0 21 21"><rect x="1.1" y="1.1" width="18.8" height="18.8" rx="2.5" fill="none" stroke="#6f6f6f" stroke-width="2.2"/><rect x="5" y="1" width="11" height="7.5" fill="#6f6f6f"/><rect x="11.5" y="2.5" width="2.5" height="4.5" fill="#fff"/></svg><svg class="a" style="left:773px;top:347px;" width="22" height="20" viewBox="0 0 22 20"><path d="M6 3H1.5v11h19V3H16" fill="none" stroke="#6f6f6f" stroke-width="1.6"/><path d="M11 1v8M8 6l3 3 3-3" fill="none" stroke="#6f6f6f" stroke-width="1.6"/><path d="M7 18h8l-1-4H8z" fill="#6f6f6f"/></svg><svg class="a" style="left:774px;top:381px;" width="21" height="21" viewBox="0 0 21 21"><rect x="1.1" y="1.1" width="18.8" height="18.8" rx="2.5" fill="none" stroke="#6f6f6f" stroke-width="2.2"/><rect x="5" y="1" width="11" height="6.5" fill="#6f6f6f"/><rect x="11.5" y="2.5" width="2.5" height="3.5" fill="#fff"/><path d="M6.5 17V10.5l7.5 6.5V10.5" fill="none" stroke="#6f6f6f" stroke-width="1.9"/></svg><svg class="a" style="left:774px;top:415px;" width="20" height="22" viewBox="0 0 20 22"><path d="M7 4V1.5h6V4" fill="none" stroke="#6f6f6f" stroke-width="2"/><rect x="1" y="3.5" width="18" height="4" rx="1" fill="#6f6f6f"/><path d="M3 7.5h14v12.5a1.5 1.5 0 0 1-1.5 1.5h-11A1.5 1.5 0 0 1 3 20z" fill="#6f6f6f"/><rect x="6" y="10" width="1.8" height="9" fill="#fff"/><rect x="9.1" y="10" width="1.8" height="9" fill="#fff"/><rect x="12.2" y="10" width="1.8" height="9" fill="#fff"/></svg><svg class="a" style="left:773px;top:449px;" width="22" height="22" viewBox="0 0 22 22"><path d="M2 4h17v12l-4 4H2z" fill="none" stroke="#6f6f6f" stroke-width="1.6"/><path d="M15 20v-4h4" fill="#6f6f6f" stroke="#6f6f6f" stroke-width="1"/><circle cx="6" cy="3" r="1.5" fill="none" stroke="#6f6f6f"/><circle cx="10" cy="3" r="1.5" fill="none" stroke="#6f6f6f"/><circle cx="14" cy="3" r="1.5" fill="none" stroke="#6f6f6f"/><path d="M13 9.5a3.5 3.5 0 1 0 0 4" fill="none" stroke="#6f6f6f" stroke-width="1.6"/></svg><svg class="a" style="left:776px;top:492px;" width="19" height="18" viewBox="0 0 19 18"><rect x="1" y="1" width="17" height="11.5" rx="2" fill="none" stroke="#6f6f6f" stroke-width="2"/><path d="M10.5 4.5l5 1.8-2 0.7 1.8 2.2-0.9 0.8-1.8-2.1-0.9 1.8z" fill="#6f6f6f"/><path d="M5 17.5h9l-2-4h-5z" fill="#6f6f6f"/></svg><svg class="a" style="left:775px;top:523px;" width="19" height="21" viewBox="0 0 19 21"><path d="M5.5 1h12.5v19H1V5.5z" fill="none" stroke="#6f6f6f" stroke-width="2"/><path d="M1.5 5.5h4v-4z" fill="#6f6f6f"/><path d="M8.3 9h2.4v4h2.3l-3.5 3.8-3.5-3.8h2.3z" fill="#6f6f6f"/></svg><svg class="a" style="left:774px;top:570px;" width="22" height="19" viewBox="0 0 22 19"><path d="M1 17.5V2h7l2 2h10.5v13.5z" fill="none" stroke="#6f6f6f" stroke-width="2"/><path d="M5 7.5h16v10H5z" fill="#6f6f6f"/></svg><div class="a" style="left:1061px;top:114px;width:22px;height:605px;background:#fff"></div><div class="a" style="left:1065px;top:130px;width:15px;height:573px;background:#f0f0f0"></div><div class="a" style="left:1065px;top:116px;width:15px;height:14px;border:1px solid #9a9a9a;background:#fff"></div><svg class="a" style="left:1068px;top:120px;" width="9" height="5" viewBox="0 0 9 5"><path d="M0 5h9L4.5 0z" fill="#222"/></svg><div class="a" style="left:1065px;top:130px;width:15px;height:99px;border:1px solid #9a9a9a;background:#fff"></div><div class="a" style="left:1065px;top:703px;width:15px;height:15px;border:1px solid #9a9a9a;background:#fff"></div><svg class="a" style="left:1068px;top:709px;" width="9" height="5" viewBox="0 0 9 5"><path d="M0 0h9L4.5 5z" fill="#222"/></svg><div class="a" style="left:0px;top:719px;width:1083px;height:28px;background:#f3f3f3"></div><svg class="a" style="left:26px;top:726px;" width="6" height="10" viewBox="0 0 6 10"><path d="M6 0v10L0 5z" fill="#c0c0c0"/></svg><svg class="a" style="left:55px;top:726px;" width="6" height="10" viewBox="0 0 6 10"><path d="M0 0v10L6 5z" fill="#c0c0c0"/></svg><div class="a" style="left:100px;top:722px;width:1px;height:20px;background:#bdbdbd"></div><div class="a" style="left:103px;top:721px;width:71px;height:22px;background:#92c865"></div><div class="a" style="left:112px;top:724px;font-size:13px;line-height:13px;color:#222;font-weight:normal;letter-spacing:0.5px">사용방법</div><div class="a" style="left:176px;top:718px;width:161px;height:23px;background:linear-gradient(#fff 15%,#fde9a3);border-left:1px solid #a8a8a8;border-right:1px solid #bdbdbd"></div><div class="a" style="left:176px;top:741px;width:161px;height:2px;background:#1f5f38"></div><div class="a" style="left:190px;top:723px;font-size:13px;line-height:13px;color:#2c6e44;font-weight:normal;letter-spacing:0.15px">납품 확인서 (누적관리)</div><svg class="a" style="left:369px;top:724px;" width="17" height="17" viewBox="0 0 17 17"><circle cx="8.5" cy="8.5" r="7.5" fill="none" stroke="#666" stroke-width="1.3"/><path d="M8.5 4.5v8M4.5 8.5h8" stroke="#666" stroke-width="1.6"/></svg><div class="a" style="left:640px;top:719px;width:443px;height:28px;background:#f3f3f3"></div><div class="a" style="left:637px;top:719px;width:28px;height:28px;background:#fdfdfd"></div><div class="a" style="left:650px;top:727px;width:2px;height:2px;background:#999"></div><div class="a" style="left:650px;top:731px;width:2px;height:2px;background:#999"></div><div class="a" style="left:650px;top:735px;width:2px;height:2px;background:#999"></div><div class="a" style="left:667px;top:725px;width:15px;height:15px;border:1px solid #9a9a9a;background:#fff"></div><svg class="a" style="left:672px;top:729px;" width="5" height="8" viewBox="0 0 5 8"><path d="M5 0v8L0 4z" fill="#222"/></svg><div class="a" style="left:681px;top:725px;width:279px;height:15px;border:1px solid #9a9a9a;background:#fff"></div><div class="a" style="left:1044px;top:725px;width:15px;height:15px;border:1px solid #9a9a9a;background:#fff"></div><svg class="a" style="left:1049px;top:729px;" width="5" height="8" viewBox="0 0 5 8"><path d="M0 0v8L5 4z" fill="#222"/></svg><div class="a" style="left:0px;top:747px;width:1083px;height:22px;background:#217346"></div><div class="a" style="left:11px;top:750px;font-size:13px;line-height:13px;color:#fff;font-weight:normal;">준비</div><svg class="a" style="left:55px;top:751px;" width="15" height="13" viewBox="0 0 15 13"><path d="M0.6 11.4V0.6h13.2v6" fill="none" stroke="#fff" stroke-width="1.1"/><path d="M0.6 11.4h5M0.6 3.2h13.2M2.5 5.8h3M2.5 8h3M2.5 10.2h3" stroke="#fff" stroke-width="1"/><circle cx="10.3" cy="9" r="3.6" fill="#217346" stroke="#fff" stroke-width="1.1"/><circle cx="10.3" cy="9" r="1.7" fill="#fff"/></svg><div class="a" style="left:768px;top:747px;width:39px;height:22px;background:#0e4d27"></div><svg class="a" style="left:779px;top:750px;" width="16" height="15" viewBox="0 0 16 15"><path d="M1 1h14v13H1zM1 5.5h14M1 9.7h14M5.5 1v13M10.2 1v13" fill="none" stroke="#fff" stroke-width="1.1"/></svg><svg class="a" style="left:821px;top:750px;" width="15" height="14" viewBox="0 0 15 14"><path d="M1 1h13v12H1z" fill="none" stroke="#fff" stroke-width="1.1"/><path d="M3.5 3.5h8v7h-8z" fill="none" stroke="#fff" stroke-width="0.9"/><path d="M5 5.5h5M5 7.2h5M5 8.9h5" stroke="#fff" stroke-width="0.8"/></svg><svg class="a" style="left:861px;top:750px;" width="15" height="15" viewBox="0 0 15 15"><path d="M1 14V1h13v13M1 9h13M5 1v5h5V1" fill="none" stroke="#fff" stroke-width="1.1"/></svg><div class="a" style="left:894px;top:757px;width:7px;height:1px;background:#fff"></div><div class="a" style="left:908px;top:757px;width:99px;height:1px;background:#d8e6dc"></div><div class="a" style="left:954px;top:752px;width:5px;height:11px;background:#fff"></div><svg class="a" style="left:1012px;top:752px;" width="9" height="10" viewBox="0 0 9 10"><path d="M4.5 0.5v9M0 5h9" stroke="#fff" stroke-width="1.2"/></svg><div class="a" style="left:1034px;top:752px;font-size:12.3px;line-height:12.3px;color:#fff;font-weight:normal;">100%</div><div class="a" style="left:0px;top:767px;width:1083px;height:1px;background:#4f7f5f"></div><div class="a" style="left:0px;top:768px;width:1083px;height:1px;background:#7d8c82"></div></body></html>
